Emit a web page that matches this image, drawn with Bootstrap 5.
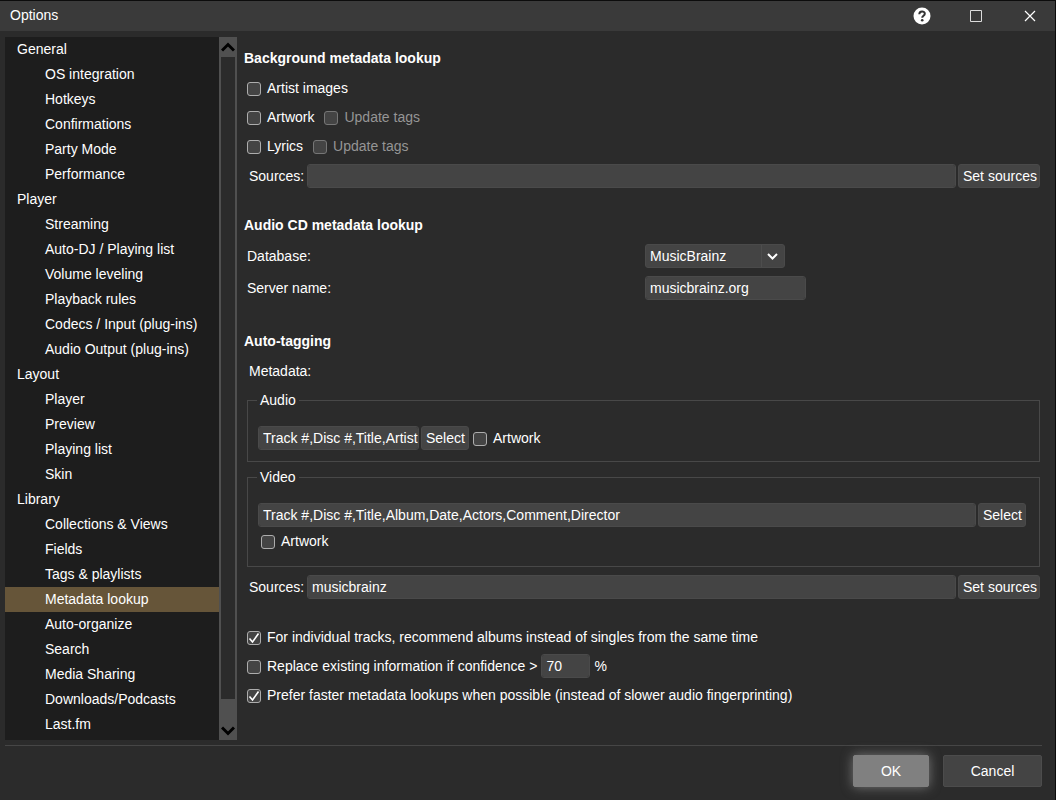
<!DOCTYPE html>
<html lang="en" data-bs-theme="dark">
<head>
<meta charset="utf-8">
<meta name="viewport" content="width=device-width, initial-scale=1">
<title>Options</title>
<link href="https://cdn.jsdelivr.net/npm/bootstrap@5.3.0/dist/css/bootstrap.min.css" rel="stylesheet">
<style>
body{font:14px/20px "Liberation Sans",Arial,sans-serif;background:#2b2b2b;color:#fff}
.window{border-top:1px solid #0c0c0c;border-right:1px solid #0c0c0c}
.titlebar{height:30px;background:#3a3a3a;padding:0 16px 2px 10px}
.titlebar button{width:18px;height:18px;border:0;padding:0;background:none;color:#fff;display:flex;align-items:center;justify-content:center}
.window-tools{gap:36px;padding-top:1px}
.upper{padding:6px 15px 0 5px}
.sidebar{width:232px}
.tree{background:#1d1d1d;padding-bottom:3px}
.tree a{flex:1 0 25px;display:flex;align-items:center;color:#fff;text-decoration:none;padding:0 0 2px 40px}
.tree a.group{padding-left:12px}
.tree a.current{background:#665539}
.scroller{width:18px;background:#2b2b2b;border-left:2px solid #505050;border-right:2px solid #505050}
.scroller button{border:0;padding:0;background:#505050;color:#000;display:flex;justify-content:center;margin:0 -2px}
.scroll-up{height:20px;align-items:center}
.scroll-down{height:41px;align-items:flex-end;padding-bottom:3px!important}
.pane{padding:7px 0 0 7px;min-width:0}
.pane h2{font-size:14px;line-height:29px;font-weight:700;margin:0}
.section-gap{margin-top:19px}
.section-gap-lg{margin-top:23px}
.line{min-height:29px;display:flex;align-items:center;padding-left:3px}
.line-tall{min-height:32px}
.line-field{padding-left:5px;gap:2px}
.line-field>label{width:56px;flex:none}
.tick{display:flex;align-items:center;gap:6px;margin-right:10px}
.tick .form-check-input{width:14px;height:14px;margin:2px 0 0;background-color:#444;border:1px solid #adadad;border-radius:3px;float:none;flex:none}
.tick .form-check-input:checked{background-color:#444;border-color:#adadad;background-size:12px 12px;background-image:url("data:image/svg+xml,%3csvg xmlns='http://www.w3.org/2000/svg' viewBox='0 0 12 12'%3e%3cpath fill='none' stroke='%23fff' stroke-width='1.6' d='M1.500 6.500 4.500 10 10.500 1.500'/%3e%3c/svg%3e")}
.tick-off{color:#959595}
.tick .form-check-input:disabled{border-color:#767676;opacity:1}
.tick-off label{opacity:1!important}
.field,.form-select.pick,.btn-flat{height:24px;padding:0 4px;border:1px solid #4a4a4a;border-radius:3px;background-color:#444;color:#fff;font-size:14px;line-height:20px}
.field{min-width:0;padding-right:0}
.field:focus{background-color:#444;color:#fff}
.btn-flat{background:#444;flex:none;white-space:nowrap}
.btn-sources{width:82px}
.btn-select{width:48px}
.w-field{width:161px;flex:none}
.w-pick{width:140px}
.w-number{width:49px;flex:none}
.form-select.pick{background-image:url("data:image/svg+xml,%3csvg xmlns='http://www.w3.org/2000/svg' viewBox='0 0 23 22'%3e%3cpath stroke='%234d4d4d' d='M.5 0v22'/%3e%3cpath fill='none' stroke='%23fff' stroke-width='2' d='m7 9 4.500 4.500L16 9'/%3e%3c/svg%3e");background-size:23px 22px;background-position:right 0 center}
.group-box{border:1px solid #484848;margin:5px 0 0 3px;padding:16px 13px 11px 10px;min-width:0}
.group-box legend{float:none;width:auto;height:20px;font-size:14px;line-height:20px;margin:0 0 0 -1px;padding:0 3px}
.group-box .line{min-height:28px}
.footer-bar{margin:5px 13px 0 5px;border-top:1px solid #464646;padding:9px 0 13px;gap:14px}
.btn-dialog{height:32px;border:1px solid #4c4c4c;border-radius:2px;background:#444;color:#fff;font-size:14px;padding:0;width:99px}
.btn-main{width:76px;background:#808080;border-color:#808080;box-shadow:0 0 12px #777}
</style>
</head>
<body>
<div class="window min-vh-100 d-flex flex-column">
  <header class="titlebar d-flex align-items-center justify-content-between">
    <span>Options</span>
    <div class="window-tools d-flex">
      <button type="button" aria-label="Help"><svg width="18" height="18" viewBox="0 0 18 18"><circle cx="9" cy="9" r="8.500" fill="#fff"/><path d="M6.300 7.200c0-3.600 5.500-3.600 5.500-.4 0 2-2.600 2-2.600 4" fill="none" stroke="#333" stroke-width="2"/><circle cx="9.200" cy="13.200" r="1.300" fill="#333"/></svg></button>
      <button type="button" aria-label="Maximize"><svg width="12" height="12" viewBox="0 0 12 12"><path d="M.5.5h11v11H.5z" fill="none" stroke="#ddd"/></svg></button>
      <button type="button" aria-label="Close"><svg width="12" height="12" viewBox="0 0 12 12"><path d="m1 1 10 10M11 1 1 11" stroke="#fff" stroke-width="1.200"/></svg></button>
    </div>
  </header>

  <div class="upper d-flex flex-grow-1">
    <aside class="sidebar d-flex flex-shrink-0">
      <nav class="tree d-flex flex-column flex-grow-1" aria-label="Option pages">
        <a href="#" class="group">General</a>
        <a href="#">OS integration</a>
        <a href="#">Hotkeys</a>
        <a href="#">Confirmations</a>
        <a href="#">Party Mode</a>
        <a href="#">Performance</a>
        <a href="#" class="group">Player</a>
        <a href="#">Streaming</a>
        <a href="#">Auto-DJ / Playing list</a>
        <a href="#">Volume leveling</a>
        <a href="#">Playback rules</a>
        <a href="#">Codecs / Input (plug-ins)</a>
        <a href="#">Audio Output (plug-ins)</a>
        <a href="#" class="group">Layout</a>
        <a href="#">Player</a>
        <a href="#">Preview</a>
        <a href="#">Playing list</a>
        <a href="#">Skin</a>
        <a href="#" class="group">Library</a>
        <a href="#">Collections &amp; Views</a>
        <a href="#">Fields</a>
        <a href="#">Tags &amp; playlists</a>
        <a href="#" class="current" aria-current="page">Metadata lookup</a>
        <a href="#">Auto-organize</a>
        <a href="#">Search</a>
        <a href="#">Media Sharing</a>
        <a href="#">Downloads/Podcasts</a>
        <a href="#">Last.fm</a>
      </nav>
      <div class="scroller d-flex flex-column justify-content-between">
        <button type="button" class="scroll-up" aria-label="Scroll up"><svg width="14" height="12" viewBox="0 0 14 12"><path d="m1 9.500 6-6 6 6" fill="none" stroke="#000" stroke-width="3"/></svg></button>
        <button type="button" class="scroll-down" aria-label="Scroll down"><svg width="14" height="12" viewBox="0 0 14 12"><path d="m1 2.500 6 6 6-6" fill="none" stroke="#000" stroke-width="3"/></svg></button>
      </div>
    </aside>

    <main class="pane flex-grow-1">
      <section>
        <h2>Background metadata lookup</h2>
        <div class="line"><div class="tick"><input class="form-check-input" type="checkbox" id="images"><label for="images">Artist images</label></div></div>
        <div class="line">
          <div class="tick"><input class="form-check-input" type="checkbox" id="art"><label for="art">Artwork</label></div>
          <div class="tick tick-off"><input class="form-check-input" type="checkbox" id="artTags" disabled><label for="artTags">Update tags</label></div>
        </div>
        <div class="line">
          <div class="tick"><input class="form-check-input" type="checkbox" id="lyrics"><label for="lyrics">Lyrics</label></div>
          <div class="tick tick-off"><input class="form-check-input" type="checkbox" id="lyricsTags" disabled><label for="lyricsTags">Update tags</label></div>
        </div>
        <div class="line line-tall line-field">
          <label for="bgSources">Sources:</label>
          <input class="form-control field flex-grow-1" type="text" id="bgSources">
          <button type="button" class="btn-flat btn-sources">Set sources</button>
        </div>
      </section>

      <section class="section-gap">
        <h2>Audio CD metadata lookup</h2>
        <div class="line line-tall p-0">
          <div class="w-50 line"><label for="db">Database:</label></div>
          <div class="w-50 line"><select class="form-select pick w-pick" id="db"><option>MusicBrainz</option></select></div>
        </div>
        <div class="line line-tall p-0">
          <div class="w-50 line"><label for="server">Server name:</label></div>
          <div class="w-50 line"><input class="form-control field w-field" type="text" id="server" value="musicbrainz.org"></div>
        </div>
      </section>

      <section class="section-gap-lg">
        <h2>Auto-tagging</h2>
        <div class="line line-field">Metadata:</div>
        <fieldset class="group-box">
          <legend>Audio</legend>
          <div class="d-flex align-items-center gap-1">
            <div class="line-field d-flex p-0">
              <input class="form-control field w-field" type="text" aria-label="Audio metadata" value="Track #,Disc #,Title,Artist">
              <button type="button" class="btn-flat btn-select">Select</button>
            </div>
            <div class="tick"><input class="form-check-input" type="checkbox" id="audioArt"><label for="audioArt">Artwork</label></div>
          </div>
        </fieldset>
        <fieldset class="group-box">
          <legend>Video</legend>
          <div class="line-field d-flex p-0">
            <input class="form-control field flex-grow-1" type="text" aria-label="Video metadata" value="Track #,Disc #,Title,Album,Date,Actors,Comment,Director">
            <button type="button" class="btn-flat btn-select">Select</button>
          </div>
          <div class="line"><div class="tick"><input class="form-check-input" type="checkbox" id="videoArt"><label for="videoArt">Artwork</label></div></div>
        </fieldset>
        <div class="line line-tall line-field mt-1">
          <label for="tagSources">Sources:</label>
          <input class="form-control field flex-grow-1" type="text" id="tagSources" value="musicbrainz">
          <button type="button" class="btn-flat btn-sources">Set sources</button>
        </div>
      </section>

      <section class="section-gap">
        <div class="line"><div class="tick"><input class="form-check-input" type="checkbox" id="albums" checked><label for="albums">For individual tracks, recommend albums instead of singles from the same time</label></div></div>
        <div class="line gap-1">
          <div class="tick me-0"><input class="form-check-input" type="checkbox" id="replace"><label for="replace">Replace existing information if confidence &gt;</label></div>
          <input class="form-control field w-number" type="text" aria-label="Confidence percent" value="70">
          <span>%</span>
        </div>
        <div class="line"><div class="tick"><input class="form-check-input" type="checkbox" id="faster" checked><label for="faster">Prefer faster metadata lookups when possible (instead of slower audio fingerprinting)</label></div></div>
      </section>
    </main>
  </div>

  <footer class="footer-bar d-flex justify-content-end">
    <button type="button" class="btn-dialog btn-main">OK</button>
    <button type="button" class="btn-dialog">Cancel</button>
  </footer>
</div>
<script src="https://cdn.jsdelivr.net/npm/bootstrap@5.3.0/dist/js/bootstrap.bundle.min.js"></script>
</body>
</html>
